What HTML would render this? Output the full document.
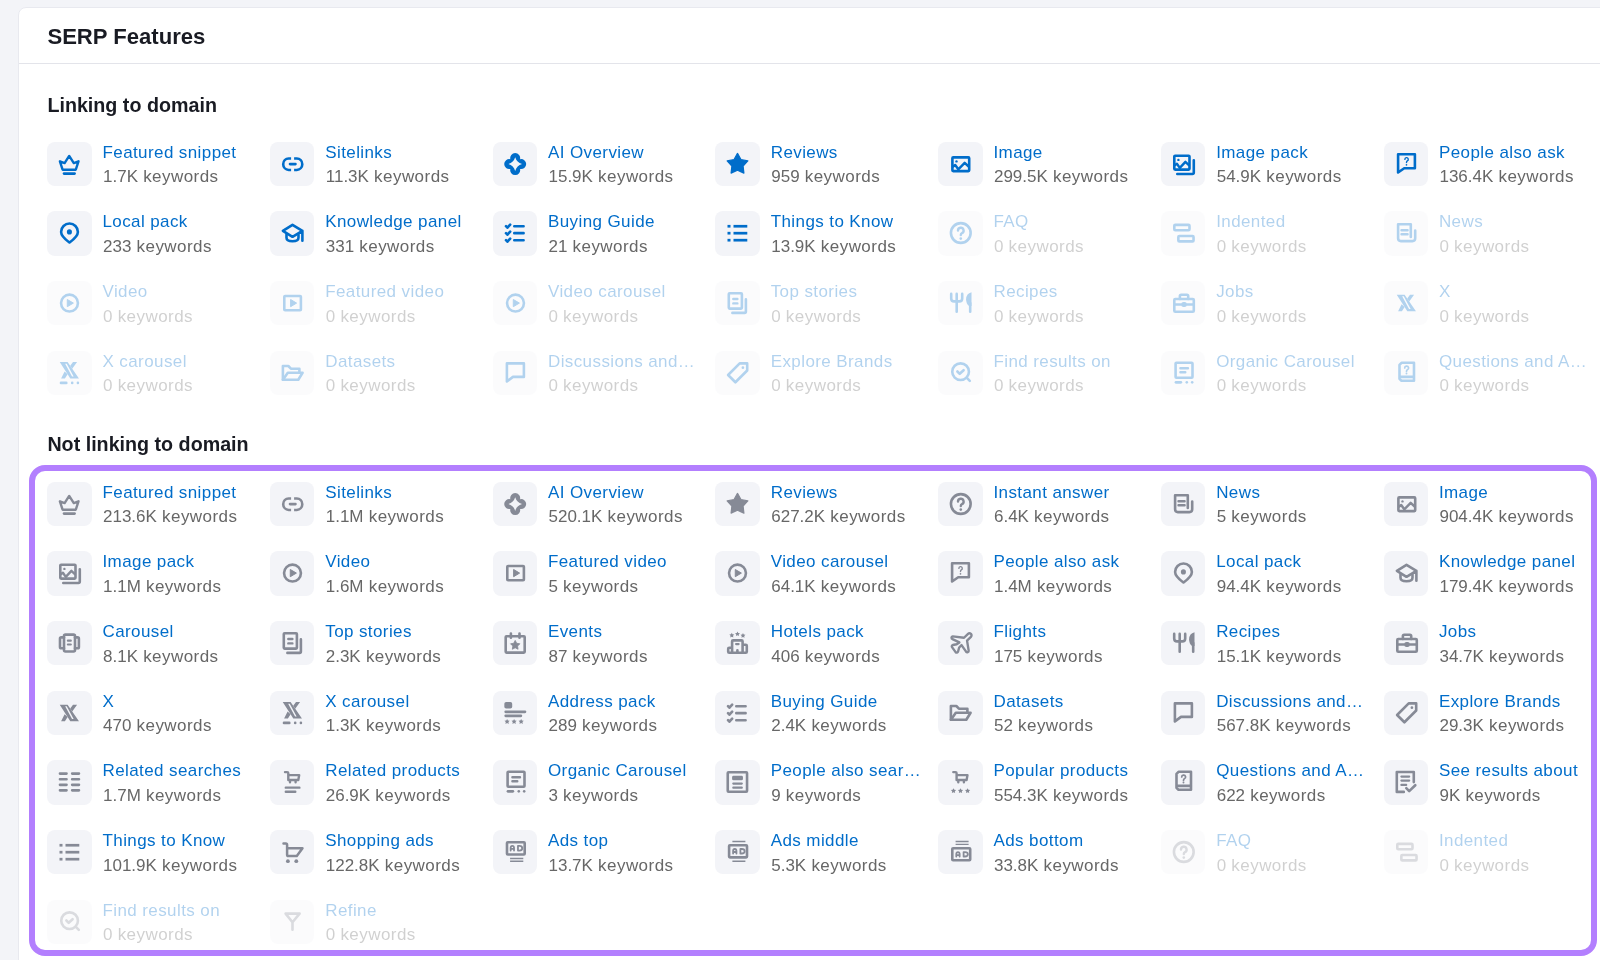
<!DOCTYPE html>
<html><head><meta charset="utf-8"><title>SERP Features</title>
<style>
html,body{margin:0;padding:0;-webkit-font-smoothing:antialiased;width:1600px;height:960px;overflow:hidden;background:#f3f4f8;font-family:"Liberation Sans",sans-serif;}
.wrap{position:absolute;left:0;top:0;width:1600px;height:960px;will-change:transform;}
.card{position:absolute;left:18px;top:7.2px;width:1620px;height:1000px;background:#fff;border:1px solid #e8e9ef;border-radius:8px;box-sizing:border-box;}
.hdr{position:absolute;left:47.4px;top:23.5px;font-weight:bold;font-size:22.1px;line-height:26px;color:#191b23;white-space:nowrap;}
.div{position:absolute;left:19px;top:62.5px;width:1600px;height:1px;background:#e3e4ea;}
.sec{position:absolute;left:47.4px;font-weight:bold;font-size:19.7px;line-height:24px;color:#191b23;white-space:nowrap;}
.it{position:absolute;width:222px;height:44.4px;}
.it.dis{opacity:0.3;}
.bx{position:absolute;left:0;top:0;width:44.4px;height:44.4px;border-radius:8px;background:#f3f4f8;}
.bx svg{position:absolute;left:0;top:0;display:block;}
.nm{position:absolute;left:55.25px;top:1px;font-size:17px;line-height:20px;color:#006dca;letter-spacing:0.4px;white-space:nowrap;}
.ct{position:absolute;left:55.75px;top:25.7px;font-size:17px;line-height:20px;color:#676767;letter-spacing:0.45px;white-space:nowrap;}
.ct .n{letter-spacing:0;}
.hl{position:absolute;left:28.75px;top:465px;width:1568.25px;height:490.6px;box-sizing:border-box;border:6.6px solid #b37ffe;border-radius:16px;}
</style></head><body><div class="wrap">
<div class="card"></div>
<div class="hdr">SERP Features</div>
<div class="div"></div>
<div class="sec" style="top:92.9px">Linking to domain</div>
<div class="it" style="left:47.25px;top:141.50px"><div class="bx" style="color:#006dca"><svg width="44.4" height="44.4" viewBox="0 0 44.4 44.4"><path fill="none" stroke="currentColor" stroke-width="2.4" stroke-linecap="round" stroke-linejoin="round" d="M12.9 19.3 L17.6 21.1 L22.2 13.9 L26.8 21.1 L31.5 19.3 L28.8 27.7 H15.6 Z"/><path fill="none" stroke="currentColor" stroke-width="2.6" stroke-linecap="round" stroke-linejoin="round" d="M17 31.6 H27.6"/></svg></div><div class="nm">Featured snippet</div><div class="ct"><span class="n">1.7K</span> keywords</div></div>
<div class="it" style="left:269.99px;top:141.50px"><div class="bx" style="color:#006dca"><svg width="44.4" height="44.4" viewBox="0 0 44.4 44.4"><g fill="none" stroke="currentColor" stroke-width="2.6" stroke-linecap="butt" stroke-linejoin="round"><path d="M21.1 16.5 H18.7 A5.74 5.74 0 0 0 18.7 27.97 H21.1"/><path d="M24.1 16.5 H26.8 A5.74 5.74 0 0 1 26.8 27.97 H24.1"/></g><path fill="none" stroke="currentColor" stroke-width="2.6" stroke-linecap="round" stroke-linejoin="round" d="M20.0 22.1 H25.5"/></svg></div><div class="nm">Sitelinks</div><div class="ct"><span class="n">11.3K</span> keywords</div></div>
<div class="it" style="left:492.73px;top:141.50px"><div class="bx" style="color:#006dca"><svg width="44.4" height="44.4" viewBox="0 0 44.4 44.4"><path fill="currentColor" fill-rule="evenodd" transform="translate(22.2 22.1)" d="M-4.87 -4.87 A5 5 0 1 1 4.87 -4.87 A5 5 0 1 1 4.87 4.87 A5 5 0 1 1 -4.87 4.87 A5 5 0 1 1 -4.87 -4.87 Z M0 -6.8 Q1.6 -1.6 6.8 0 Q1.6 1.6 0 6.8 Q-1.6 1.6 -6.8 0 Q-1.6 -1.6 0 -6.8 Z"/></svg></div><div class="nm">AI Overview</div><div class="ct"><span class="n">15.9K</span> keywords</div></div>
<div class="it" style="left:715.47px;top:141.50px"><div class="bx" style="color:#006dca"><svg width="44.4" height="44.4" viewBox="0 0 44.4 44.4"><polygon fill="currentColor" stroke="currentColor" stroke-width="1.2" stroke-linejoin="round" points="22.50,11.40 25.97,17.53 32.87,18.93 28.11,24.12 28.91,31.12 22.50,28.20 16.09,31.12 16.89,24.12 12.13,18.93 19.03,17.53"/></svg></div><div class="nm">Reviews</div><div class="ct"><span class="n">959</span> keywords</div></div>
<div class="it" style="left:938.21px;top:141.50px"><div class="bx" style="color:#006dca"><svg width="44.4" height="44.4" viewBox="0 0 44.4 44.4"><rect fill="none" stroke="currentColor" stroke-width="2.6" stroke-linecap="round" stroke-linejoin="round" x="14.4" y="15.4" width="16.8" height="13.7" rx="0.8"/><circle fill="currentColor" cx="18.5" cy="19.4" r="1.2"/><path fill="none" stroke="currentColor" stroke-width="2.5" stroke-linecap="round" stroke-linejoin="round" d="M15.2 24.4 L17.2 23.1 L20.3 27.3 L26.7 20.9 L30.4 24.2"/></svg></div><div class="nm">Image</div><div class="ct"><span class="n">299.5K</span> keywords</div></div>
<div class="it" style="left:1160.95px;top:141.50px"><div class="bx" style="color:#006dca"><svg width="44.4" height="44.4" viewBox="0 0 44.4 44.4"><rect fill="none" stroke="currentColor" stroke-width="2.6" stroke-linecap="round" stroke-linejoin="round" x="13.3" y="13.8" width="15.2" height="13.8" rx="0.8"/><circle fill="currentColor" cx="17.4" cy="17.9" r="1.2"/><path fill="none" stroke="currentColor" stroke-width="2.4" stroke-linecap="round" stroke-linejoin="round" d="M14.1 22.9 L15.9 21.7 L18.8 25.9 L24.4 19.9 L27.6 22.9"/><path fill="none" stroke="currentColor" stroke-width="2.6" stroke-linecap="round" stroke-linejoin="round" d="M16.3 32 H31.4 Q32.8 32 32.8 30.6 V18.2"/></svg></div><div class="nm">Image pack</div><div class="ct"><span class="n">54.9K</span> keywords</div></div>
<div class="it" style="left:1383.69px;top:141.50px"><div class="bx" style="color:#006dca"><svg width="44.4" height="44.4" viewBox="0 0 44.4 44.4"><path fill="none" stroke="currentColor" stroke-width="2.6" stroke-linecap="round" stroke-linejoin="round" d="M14.1 30.5 V12.2 H30.9 V26.3 H20.2 Z"/><path fill="none" stroke="currentColor" stroke-width="1.4" stroke-linecap="round" stroke-linejoin="round" d="M20.9 17.4 A1.7 1.7 0 1 1 23.3 18.9 Q22.5 19.4 22.5 20.6"/><circle fill="currentColor" cx="22.5" cy="22.8" r="0.85"/></svg></div><div class="nm">People also ask</div><div class="ct"><span class="n">136.4K</span> keywords</div></div>
<div class="it" style="left:47.25px;top:211.20px"><div class="bx" style="color:#006dca"><svg width="44.4" height="44.4" viewBox="0 0 44.4 44.4"><path fill="none" stroke="currentColor" stroke-width="2.6" stroke-linecap="round" stroke-linejoin="round" d="M22.5 31.5 C19 28.9 14.1 25.3 14.1 20.9 A8.4 8.4 0 0 1 30.9 20.9 C30.9 25.3 26 28.9 22.5 31.5Z"/><circle fill="currentColor" cx="22.4" cy="20.9" r="2.55"/></svg></div><div class="nm">Local pack</div><div class="ct"><span class="n">233</span> keywords</div></div>
<div class="it" style="left:269.99px;top:211.20px"><div class="bx" style="color:#006dca"><svg width="44.4" height="44.4" viewBox="0 0 44.4 44.4"><path fill="none" stroke="currentColor" stroke-width="2.6" stroke-linecap="round" stroke-linejoin="round" d="M12.9 19.8 L22.5 13.8 L32.4 19.8 L22.5 25.8 Z M32.4 19.8 V29.8"/><path fill="none" stroke="currentColor" stroke-width="2.6" stroke-linecap="round" stroke-linejoin="round" d="M16.5 23.4 V26.8 Q16.5 30.3 22.5 30.3 Q28.5 30.3 28.5 26.8 V23.4"/></svg></div><div class="nm">Knowledge panel</div><div class="ct"><span class="n">331</span> keywords</div></div>
<div class="it" style="left:492.73px;top:211.20px"><div class="bx" style="color:#006dca"><svg width="44.4" height="44.4" viewBox="0 0 44.4 44.4"><g fill="none" stroke="currentColor" stroke-width="2.6" stroke-linecap="round" stroke-linejoin="round"><path d="M13.0 15.2 L14.4 16.7 L17.2 13.6"/><path d="M13.0 22.2 L14.4 23.7 L17.2 20.6"/><path d="M13.0 29.2 L14.4 30.7 L17.2 27.6"/><path d="M21.3 15.2 H30.6 M21.3 22.15 H30.6 M21.3 29.2 H30.6"/></g></svg></div><div class="nm">Buying Guide</div><div class="ct"><span class="n">21</span> keywords</div></div>
<div class="it" style="left:715.47px;top:211.20px"><div class="bx" style="color:#006dca"><svg width="44.4" height="44.4" viewBox="0 0 44.4 44.4"><g fill="currentColor"><rect x="12.5" y="13.9" width="3" height="2.7"/><rect x="18.5" y="13.9" width="13.8" height="2.7"/><rect x="12.5" y="20.85" width="3" height="2.7"/><rect x="18.5" y="20.85" width="13.8" height="2.7"/><rect x="12.5" y="27.85" width="3" height="2.7"/><rect x="18.5" y="27.85" width="13.8" height="2.7"/></g></svg></div><div class="nm">Things to Know</div><div class="ct"><span class="n">13.9K</span> keywords</div></div>
<div class="it dis" style="left:938.21px;top:211.20px"><div class="bx" style="color:#006dca"><svg width="44.4" height="44.4" viewBox="0 0 44.4 44.4"><circle fill="none" stroke="currentColor" stroke-width="2.6" stroke-linecap="round" stroke-linejoin="round" cx="22.8" cy="22.0" r="9.85"/><path fill="none" stroke="currentColor" stroke-width="2.4" stroke-linecap="round" stroke-linejoin="round" d="M20.0 19.6 A2.8 2.8 0 1 1 24.0 22.1 Q22.8 22.7 22.8 24.0"/><circle fill="currentColor" cx="22.8" cy="27.6" r="1.3"/></svg></div><div class="nm">FAQ</div><div class="ct"><span class="n">0</span> keywords</div></div>
<div class="it dis" style="left:1160.95px;top:211.20px"><div class="bx" style="color:#006dca"><svg width="44.4" height="44.4" viewBox="0 0 44.4 44.4"><rect fill="none" stroke="currentColor" stroke-width="2.6" stroke-linecap="round" stroke-linejoin="round" x="13.3" y="13.85" width="15.2" height="5.45" rx="1"/><rect fill="none" stroke="currentColor" stroke-width="2.6" stroke-linecap="round" stroke-linejoin="round" x="17.35" y="24.95" width="15.2" height="5.45" rx="1"/></svg></div><div class="nm">Indented</div><div class="ct"><span class="n">0</span> keywords</div></div>
<div class="it dis" style="left:1383.69px;top:211.20px"><div class="bx" style="color:#006dca"><svg width="44.4" height="44.4" viewBox="0 0 44.4 44.4"><path fill="none" stroke="currentColor" stroke-width="2.6" stroke-linecap="round" stroke-linejoin="round" d="M26.8 26 V13.3 H14.1 V27.3 Q14.1 30.1 16.9 30.1 H28.4 Q31.2 30.1 31.2 27.3 V19.5"/><path fill="none" stroke="currentColor" stroke-width="2.4" stroke-linecap="round" stroke-linejoin="round" d="M17.5 19.3 H23.6 M17.5 23.3 H23.6"/></svg></div><div class="nm">News</div><div class="ct"><span class="n">0</span> keywords</div></div>
<div class="it dis" style="left:47.25px;top:280.90px"><div class="bx" style="color:#006dca"><svg width="44.4" height="44.4" viewBox="0 0 44.4 44.4"><circle fill="none" stroke="currentColor" stroke-width="2.6" stroke-linecap="round" stroke-linejoin="round" cx="22.5" cy="22.1" r="8.45"/><path fill="currentColor" stroke="currentColor" stroke-width="1" stroke-linejoin="round" d="M20.3 18.5 L26.4 22.1 L20.3 25.7 Z"/></svg></div><div class="nm">Video</div><div class="ct"><span class="n">0</span> keywords</div></div>
<div class="it dis" style="left:269.99px;top:280.90px"><div class="bx" style="color:#006dca"><svg width="44.4" height="44.4" viewBox="0 0 44.4 44.4"><rect fill="none" stroke="currentColor" stroke-width="2.6" stroke-linecap="round" stroke-linejoin="round" x="14.3" y="15.0" width="16.6" height="14.2" rx="0.8"/><path fill="currentColor" stroke="currentColor" stroke-width="1" stroke-linejoin="round" d="M20.6 18.5 L26.6 22.1 L20.6 25.7 Z"/></svg></div><div class="nm">Featured video</div><div class="ct"><span class="n">0</span> keywords</div></div>
<div class="it dis" style="left:492.73px;top:280.90px"><div class="bx" style="color:#006dca"><svg width="44.4" height="44.4" viewBox="0 0 44.4 44.4"><circle fill="none" stroke="currentColor" stroke-width="2.6" stroke-linecap="round" stroke-linejoin="round" cx="22.5" cy="22.1" r="8.45"/><path fill="currentColor" stroke="currentColor" stroke-width="1" stroke-linejoin="round" d="M20.3 18.5 L26.4 22.1 L20.3 25.7 Z"/></svg></div><div class="nm">Video carousel</div><div class="ct"><span class="n">0</span> keywords</div></div>
<div class="it dis" style="left:715.47px;top:280.90px"><div class="bx" style="color:#006dca"><svg width="44.4" height="44.4" viewBox="0 0 44.4 44.4"><rect fill="none" stroke="currentColor" stroke-width="2.6" stroke-linecap="round" stroke-linejoin="round" x="13.8" y="12.3" width="13.1" height="15.3" rx="0.8"/><path fill="none" stroke="currentColor" stroke-width="2.4" stroke-linecap="round" stroke-linejoin="round" d="M18.3 18.0 H22.4 M18.3 22.4 H22.4"/><path fill="none" stroke="currentColor" stroke-width="2.6" stroke-linecap="round" stroke-linejoin="round" d="M17.4 31.9 H29.6 Q30.9 31.9 30.9 30.6 V18.4"/></svg></div><div class="nm">Top stories</div><div class="ct"><span class="n">0</span> keywords</div></div>
<div class="it dis" style="left:938.21px;top:280.90px"><div class="bx" style="color:#006dca"><svg width="44.4" height="44.4" viewBox="0 0 44.4 44.4"><path fill="none" stroke="currentColor" stroke-width="2.6" stroke-linecap="round" stroke-linejoin="round" d="M13.2 12.9 V17.5 Q13.2 20.4 16.1 20.4 H21.3 Q24.2 20.4 24.2 17.5 V12.9 M18.7 12.9 V30.7 M32.2 22 V30.7"/><path fill="currentColor" d="M33.5 11.3 V25 H31 Q28.1 23 28.1 18.2 Q28.3 12.5 33.5 11.3 Z"/></svg></div><div class="nm">Recipes</div><div class="ct"><span class="n">0</span> keywords</div></div>
<div class="it dis" style="left:1160.95px;top:280.90px"><div class="bx" style="color:#006dca"><svg width="44.4" height="44.4" viewBox="0 0 44.4 44.4"><rect fill="none" stroke="currentColor" stroke-width="2.6" stroke-linecap="round" stroke-linejoin="round" x="13.3" y="18" width="19.5" height="12.8" rx="1"/><path fill="none" stroke="currentColor" stroke-width="2.6" stroke-linecap="round" stroke-linejoin="round" d="M18.9 18 V15.0 Q18.9 13.7 20.2 13.7 H25.9 Q27.2 13.7 27.2 15.0 V18 M13.3 23.5 H32.8"/><rect fill="currentColor" x="20.3" y="21.0" width="5.5" height="4.9" rx="2.2"/></svg></div><div class="nm">Jobs</div><div class="ct"><span class="n">0</span> keywords</div></div>
<div class="it dis" style="left:1383.69px;top:280.90px"><div class="bx" style="color:#006dca"><svg width="44.4" height="44.4" viewBox="0 0 44.4 44.4"><path fill="currentColor" fill-rule="evenodd" d="M12.73 13.73 H20.6 L31.96 30.26 H23.3 Z M18.16 15.36 H19.76 L26.64 28.09 H25.04 Z"/><path fill="currentColor" d="M26.0 13.73 H30.1 L25.21 20.44 L23.22 17.54 Z M14.1 30.26 H17.9 L20.63 25.89 L17.6 23.2 Z"/></svg></div><div class="nm">X</div><div class="ct"><span class="n">0</span> keywords</div></div>
<div class="it dis" style="left:47.25px;top:350.60px"><div class="bx" style="color:#006dca"><svg width="44.4" height="44.4" viewBox="0 0 44.4 44.4"><g transform="translate(0 -2.7)"><path fill="currentColor" fill-rule="evenodd" d="M12.73 13.73 H20.6 L31.96 30.26 H23.3 Z M18.16 15.36 H19.76 L26.64 28.09 H25.04 Z"/><path fill="currentColor" d="M26.0 13.73 H30.1 L25.21 20.44 L23.22 17.54 Z M14.1 30.26 H17.9 L20.63 25.89 L17.6 23.2 Z"/></g><path fill="none" stroke="currentColor" stroke-width="2.6" stroke-linecap="round" stroke-linejoin="round" d="M14.0 31.9 H19.3"/><circle fill="currentColor" cx="25.2" cy="31.9" r="1.3"/><circle fill="currentColor" cx="30.9" cy="31.9" r="1.3"/></svg></div><div class="nm">X carousel</div><div class="ct"><span class="n">0</span> keywords</div></div>
<div class="it dis" style="left:269.99px;top:350.60px"><div class="bx" style="color:#006dca"><svg width="44.4" height="44.4" viewBox="0 0 44.4 44.4"><path fill="none" stroke="currentColor" stroke-width="2.6" stroke-linecap="round" stroke-linejoin="round" d="M12.9 28.8 V15.0 H18.3 L20.9 17.7 H29.4 V21.0"/><path fill="none" stroke="currentColor" stroke-width="2.6" stroke-linecap="round" stroke-linejoin="round" d="M12.9 28.8 L17.8 21.8 H32.6 L28.3 28.8 Z"/></svg></div><div class="nm">Datasets</div><div class="ct"><span class="n">0</span> keywords</div></div>
<div class="it dis" style="left:492.73px;top:350.60px"><div class="bx" style="color:#006dca"><svg width="44.4" height="44.4" viewBox="0 0 44.4 44.4"><path fill="none" stroke="currentColor" stroke-width="2.6" stroke-linecap="round" stroke-linejoin="round" d="M13.9 30.4 V12.4 H30.9 V25.9 H20.0 Z"/></svg></div><div class="nm">Discussions and…</div><div class="ct"><span class="n">0</span> keywords</div></div>
<div class="it dis" style="left:715.47px;top:350.60px"><div class="bx" style="color:#006dca"><svg width="44.4" height="44.4" viewBox="0 0 44.4 44.4"><path fill="none" stroke="currentColor" stroke-width="2.6" stroke-linecap="round" stroke-linejoin="round" d="M32.2 12.4 V19.5 L20.4 31.3 L13.1 24 L24.7 12.4 Z"/><circle fill="currentColor" cx="27.9" cy="16.7" r="1.35"/></svg></div><div class="nm">Explore Brands</div><div class="ct"><span class="n">0</span> keywords</div></div>
<div class="it dis" style="left:938.21px;top:350.60px"><div class="bx" style="color:#006dca"><svg width="44.4" height="44.4" viewBox="0 0 44.4 44.4"><circle fill="none" stroke="currentColor" stroke-width="2.6" stroke-linecap="round" stroke-linejoin="round" cx="22.6" cy="20.7" r="8.35"/><path fill="none" stroke="currentColor" stroke-width="2.6" stroke-linecap="round" stroke-linejoin="round" d="M28.6 26.7 L31.8 29.9"/><path fill="none" stroke="currentColor" stroke-width="2.6" stroke-linecap="round" stroke-linejoin="round" d="M19.4 20.5 L21.7 22.8 L25.6 19.2"/></svg></div><div class="nm">Find results on</div><div class="ct"><span class="n">0</span> keywords</div></div>
<div class="it dis" style="left:1160.95px;top:350.60px"><div class="bx" style="color:#006dca"><svg width="44.4" height="44.4" viewBox="0 0 44.4 44.4"><rect fill="none" stroke="currentColor" stroke-width="2.6" stroke-linecap="round" stroke-linejoin="round" x="14.6" y="11.8" width="16.9" height="15.0" rx="0.8"/><path fill="none" stroke="currentColor" stroke-width="2.4" stroke-linecap="round" stroke-linejoin="round" d="M19.4 17.3 H27.0 M19.4 21.3 H24.3"/><path fill="none" stroke="currentColor" stroke-width="2.6" stroke-linecap="round" stroke-linejoin="round" d="M14.9 31.35 H19.9"/><circle fill="currentColor" cx="25.8" cy="31.35" r="1.3"/><circle fill="currentColor" cx="31.2" cy="31.35" r="1.3"/></svg></div><div class="nm">Organic Carousel</div><div class="ct"><span class="n">0</span> keywords</div></div>
<div class="it dis" style="left:1383.69px;top:350.60px"><div class="bx" style="color:#006dca"><svg width="44.4" height="44.4" viewBox="0 0 44.4 44.4"><path fill="none" stroke="currentColor" stroke-width="2.6" stroke-linecap="round" stroke-linejoin="round" d="M17.5 11.8 H30.0 V29.8 H17.5 L15.5 27.8 V13.8 Z M15.5 25.9 H30.0"/><path fill="none" stroke="currentColor" stroke-width="1.7" stroke-linecap="round" stroke-linejoin="round" d="M20.7 17.0 A1.95 1.95 0 1 1 23.4 18.8 Q22.5 19.3 22.5 20.4"/><circle fill="currentColor" cx="22.5" cy="22.5" r="0.95"/></svg></div><div class="nm">Questions and A…</div><div class="ct"><span class="n">0</span> keywords</div></div>
<div class="sec" style="top:431.9px">Not linking to domain</div>
<div class="it" style="left:47.25px;top:481.50px"><div class="bx" style="color:#868a96"><svg width="44.4" height="44.4" viewBox="0 0 44.4 44.4"><path fill="none" stroke="currentColor" stroke-width="2.4" stroke-linecap="round" stroke-linejoin="round" d="M12.9 19.3 L17.6 21.1 L22.2 13.9 L26.8 21.1 L31.5 19.3 L28.8 27.7 H15.6 Z"/><path fill="none" stroke="currentColor" stroke-width="2.6" stroke-linecap="round" stroke-linejoin="round" d="M17 31.6 H27.6"/></svg></div><div class="nm">Featured snippet</div><div class="ct"><span class="n">213.6K</span> keywords</div></div>
<div class="it" style="left:269.99px;top:481.50px"><div class="bx" style="color:#868a96"><svg width="44.4" height="44.4" viewBox="0 0 44.4 44.4"><g fill="none" stroke="currentColor" stroke-width="2.6" stroke-linecap="butt" stroke-linejoin="round"><path d="M21.1 16.5 H18.7 A5.74 5.74 0 0 0 18.7 27.97 H21.1"/><path d="M24.1 16.5 H26.8 A5.74 5.74 0 0 1 26.8 27.97 H24.1"/></g><path fill="none" stroke="currentColor" stroke-width="2.6" stroke-linecap="round" stroke-linejoin="round" d="M20.0 22.1 H25.5"/></svg></div><div class="nm">Sitelinks</div><div class="ct"><span class="n">1.1M</span> keywords</div></div>
<div class="it" style="left:492.73px;top:481.50px"><div class="bx" style="color:#868a96"><svg width="44.4" height="44.4" viewBox="0 0 44.4 44.4"><path fill="currentColor" fill-rule="evenodd" transform="translate(22.2 22.1)" d="M-4.87 -4.87 A5 5 0 1 1 4.87 -4.87 A5 5 0 1 1 4.87 4.87 A5 5 0 1 1 -4.87 4.87 A5 5 0 1 1 -4.87 -4.87 Z M0 -6.8 Q1.6 -1.6 6.8 0 Q1.6 1.6 0 6.8 Q-1.6 1.6 -6.8 0 Q-1.6 -1.6 0 -6.8 Z"/></svg></div><div class="nm">AI Overview</div><div class="ct"><span class="n">520.1K</span> keywords</div></div>
<div class="it" style="left:715.47px;top:481.50px"><div class="bx" style="color:#868a96"><svg width="44.4" height="44.4" viewBox="0 0 44.4 44.4"><polygon fill="currentColor" stroke="currentColor" stroke-width="1.2" stroke-linejoin="round" points="22.50,11.40 25.97,17.53 32.87,18.93 28.11,24.12 28.91,31.12 22.50,28.20 16.09,31.12 16.89,24.12 12.13,18.93 19.03,17.53"/></svg></div><div class="nm">Reviews</div><div class="ct"><span class="n">627.2K</span> keywords</div></div>
<div class="it" style="left:938.21px;top:481.50px"><div class="bx" style="color:#868a96"><svg width="44.4" height="44.4" viewBox="0 0 44.4 44.4"><circle fill="none" stroke="currentColor" stroke-width="2.6" stroke-linecap="round" stroke-linejoin="round" cx="22.8" cy="22.0" r="9.85"/><path fill="none" stroke="currentColor" stroke-width="2.4" stroke-linecap="round" stroke-linejoin="round" d="M20.0 19.6 A2.8 2.8 0 1 1 24.0 22.1 Q22.8 22.7 22.8 24.0"/><circle fill="currentColor" cx="22.8" cy="27.6" r="1.3"/></svg></div><div class="nm">Instant answer</div><div class="ct"><span class="n">6.4K</span> keywords</div></div>
<div class="it" style="left:1160.95px;top:481.50px"><div class="bx" style="color:#868a96"><svg width="44.4" height="44.4" viewBox="0 0 44.4 44.4"><path fill="none" stroke="currentColor" stroke-width="2.6" stroke-linecap="round" stroke-linejoin="round" d="M26.8 26 V13.3 H14.1 V27.3 Q14.1 30.1 16.9 30.1 H28.4 Q31.2 30.1 31.2 27.3 V19.5"/><path fill="none" stroke="currentColor" stroke-width="2.4" stroke-linecap="round" stroke-linejoin="round" d="M17.5 19.3 H23.6 M17.5 23.3 H23.6"/></svg></div><div class="nm">News</div><div class="ct"><span class="n">5</span> keywords</div></div>
<div class="it" style="left:1383.69px;top:481.50px"><div class="bx" style="color:#868a96"><svg width="44.4" height="44.4" viewBox="0 0 44.4 44.4"><rect fill="none" stroke="currentColor" stroke-width="2.6" stroke-linecap="round" stroke-linejoin="round" x="14.4" y="15.4" width="16.8" height="13.7" rx="0.8"/><circle fill="currentColor" cx="18.5" cy="19.4" r="1.2"/><path fill="none" stroke="currentColor" stroke-width="2.5" stroke-linecap="round" stroke-linejoin="round" d="M15.2 24.4 L17.2 23.1 L20.3 27.3 L26.7 20.9 L30.4 24.2"/></svg></div><div class="nm">Image</div><div class="ct"><span class="n">904.4K</span> keywords</div></div>
<div class="it" style="left:47.25px;top:551.20px"><div class="bx" style="color:#868a96"><svg width="44.4" height="44.4" viewBox="0 0 44.4 44.4"><rect fill="none" stroke="currentColor" stroke-width="2.6" stroke-linecap="round" stroke-linejoin="round" x="13.3" y="13.8" width="15.2" height="13.8" rx="0.8"/><circle fill="currentColor" cx="17.4" cy="17.9" r="1.2"/><path fill="none" stroke="currentColor" stroke-width="2.4" stroke-linecap="round" stroke-linejoin="round" d="M14.1 22.9 L15.9 21.7 L18.8 25.9 L24.4 19.9 L27.6 22.9"/><path fill="none" stroke="currentColor" stroke-width="2.6" stroke-linecap="round" stroke-linejoin="round" d="M16.3 32 H31.4 Q32.8 32 32.8 30.6 V18.2"/></svg></div><div class="nm">Image pack</div><div class="ct"><span class="n">1.1M</span> keywords</div></div>
<div class="it" style="left:269.99px;top:551.20px"><div class="bx" style="color:#868a96"><svg width="44.4" height="44.4" viewBox="0 0 44.4 44.4"><circle fill="none" stroke="currentColor" stroke-width="2.6" stroke-linecap="round" stroke-linejoin="round" cx="22.5" cy="22.1" r="8.45"/><path fill="currentColor" stroke="currentColor" stroke-width="1" stroke-linejoin="round" d="M20.3 18.5 L26.4 22.1 L20.3 25.7 Z"/></svg></div><div class="nm">Video</div><div class="ct"><span class="n">1.6M</span> keywords</div></div>
<div class="it" style="left:492.73px;top:551.20px"><div class="bx" style="color:#868a96"><svg width="44.4" height="44.4" viewBox="0 0 44.4 44.4"><rect fill="none" stroke="currentColor" stroke-width="2.6" stroke-linecap="round" stroke-linejoin="round" x="14.3" y="15.0" width="16.6" height="14.2" rx="0.8"/><path fill="currentColor" stroke="currentColor" stroke-width="1" stroke-linejoin="round" d="M20.6 18.5 L26.6 22.1 L20.6 25.7 Z"/></svg></div><div class="nm">Featured video</div><div class="ct"><span class="n">5</span> keywords</div></div>
<div class="it" style="left:715.47px;top:551.20px"><div class="bx" style="color:#868a96"><svg width="44.4" height="44.4" viewBox="0 0 44.4 44.4"><circle fill="none" stroke="currentColor" stroke-width="2.6" stroke-linecap="round" stroke-linejoin="round" cx="22.5" cy="22.1" r="8.45"/><path fill="currentColor" stroke="currentColor" stroke-width="1" stroke-linejoin="round" d="M20.3 18.5 L26.4 22.1 L20.3 25.7 Z"/></svg></div><div class="nm">Video carousel</div><div class="ct"><span class="n">64.1K</span> keywords</div></div>
<div class="it" style="left:938.21px;top:551.20px"><div class="bx" style="color:#868a96"><svg width="44.4" height="44.4" viewBox="0 0 44.4 44.4"><path fill="none" stroke="currentColor" stroke-width="2.6" stroke-linecap="round" stroke-linejoin="round" d="M14.1 30.5 V12.2 H30.9 V26.3 H20.2 Z"/><path fill="none" stroke="currentColor" stroke-width="1.4" stroke-linecap="round" stroke-linejoin="round" d="M20.9 17.4 A1.7 1.7 0 1 1 23.3 18.9 Q22.5 19.4 22.5 20.6"/><circle fill="currentColor" cx="22.5" cy="22.8" r="0.85"/></svg></div><div class="nm">People also ask</div><div class="ct"><span class="n">1.4M</span> keywords</div></div>
<div class="it" style="left:1160.95px;top:551.20px"><div class="bx" style="color:#868a96"><svg width="44.4" height="44.4" viewBox="0 0 44.4 44.4"><path fill="none" stroke="currentColor" stroke-width="2.6" stroke-linecap="round" stroke-linejoin="round" d="M22.5 31.5 C19 28.9 14.1 25.3 14.1 20.9 A8.4 8.4 0 0 1 30.9 20.9 C30.9 25.3 26 28.9 22.5 31.5Z"/><circle fill="currentColor" cx="22.4" cy="20.9" r="2.55"/></svg></div><div class="nm">Local pack</div><div class="ct"><span class="n">94.4K</span> keywords</div></div>
<div class="it" style="left:1383.69px;top:551.20px"><div class="bx" style="color:#868a96"><svg width="44.4" height="44.4" viewBox="0 0 44.4 44.4"><path fill="none" stroke="currentColor" stroke-width="2.6" stroke-linecap="round" stroke-linejoin="round" d="M12.9 19.8 L22.5 13.8 L32.4 19.8 L22.5 25.8 Z M32.4 19.8 V29.8"/><path fill="none" stroke="currentColor" stroke-width="2.6" stroke-linecap="round" stroke-linejoin="round" d="M16.5 23.4 V26.8 Q16.5 30.3 22.5 30.3 Q28.5 30.3 28.5 26.8 V23.4"/></svg></div><div class="nm">Knowledge panel</div><div class="ct"><span class="n">179.4K</span> keywords</div></div>
<div class="it" style="left:47.25px;top:620.90px"><div class="bx" style="color:#868a96"><svg width="44.4" height="44.4" viewBox="0 0 44.4 44.4"><rect fill="none" stroke="currentColor" stroke-width="2.6" stroke-linecap="round" stroke-linejoin="round" x="17.0" y="13.65" width="11.0" height="16.9" rx="1.5"/><path fill="none" stroke="currentColor" stroke-width="2.6" stroke-linecap="round" stroke-linejoin="round" d="M17 16.4 H14.3 Q13 16.4 13 17.7 V26.0 Q13 27.3 14.3 27.3 H17 M28 16.4 H30.6 Q31.9 16.4 31.9 17.7 V26.0 Q31.9 27.3 30.6 27.3 H28"/><path fill="none" stroke="currentColor" stroke-width="2.2" stroke-linecap="round" stroke-linejoin="round" d="M20.9 19.7 H23.8 M20.9 23.5 H23.8"/></svg></div><div class="nm">Carousel</div><div class="ct"><span class="n">8.1K</span> keywords</div></div>
<div class="it" style="left:269.99px;top:620.90px"><div class="bx" style="color:#868a96"><svg width="44.4" height="44.4" viewBox="0 0 44.4 44.4"><rect fill="none" stroke="currentColor" stroke-width="2.6" stroke-linecap="round" stroke-linejoin="round" x="13.8" y="12.3" width="13.1" height="15.3" rx="0.8"/><path fill="none" stroke="currentColor" stroke-width="2.4" stroke-linecap="round" stroke-linejoin="round" d="M18.3 18.0 H22.4 M18.3 22.4 H22.4"/><path fill="none" stroke="currentColor" stroke-width="2.6" stroke-linecap="round" stroke-linejoin="round" d="M17.4 31.9 H29.6 Q30.9 31.9 30.9 30.6 V18.4"/></svg></div><div class="nm">Top stories</div><div class="ct"><span class="n">2.3K</span> keywords</div></div>
<div class="it" style="left:492.73px;top:620.90px"><div class="bx" style="color:#868a96"><svg width="44.4" height="44.4" viewBox="0 0 44.4 44.4"><rect fill="none" stroke="currentColor" stroke-width="2.6" stroke-linecap="round" stroke-linejoin="round" x="12.7" y="15.3" width="19.0" height="16.3" rx="0.8"/><path fill="none" stroke="currentColor" stroke-width="2.6" stroke-linecap="round" stroke-linejoin="round" d="M17.9 12.6 V16.8 M26.5 12.6 V16.8"/><polygon fill="currentColor" stroke="currentColor" stroke-width="0.8" stroke-linejoin="round" points="22.20,19.40 23.67,22.28 26.86,22.79 24.58,25.07 25.08,28.26 22.20,26.80 19.32,28.26 19.82,25.07 17.54,22.79 20.73,22.28"/></svg></div><div class="nm">Events</div><div class="ct"><span class="n">87</span> keywords</div></div>
<div class="it" style="left:715.47px;top:620.90px"><div class="bx" style="color:#868a96"><svg width="44.4" height="44.4" viewBox="0 0 44.4 44.4"><polygon fill="currentColor" points="16.80,11.80 17.56,13.35 19.27,13.60 18.04,14.80 18.33,16.50 16.80,15.70 15.27,16.50 15.56,14.80 14.33,13.60 16.04,13.35"/><polygon fill="currentColor" points="22.50,10.40 23.26,11.95 24.97,12.20 23.74,13.40 24.03,15.10 22.50,14.30 20.97,15.10 21.26,13.40 20.03,12.20 21.74,11.95"/><polygon fill="currentColor" points="28.00,12.00 28.76,13.55 30.47,13.80 29.24,15.00 29.53,16.70 28.00,15.90 26.47,16.70 26.76,15.00 25.53,13.80 27.24,13.55"/><path fill="none" stroke="currentColor" stroke-width="2.6" stroke-linecap="round" stroke-linejoin="round" d="M17.1 31.8 V20.4 Q17.1 19.4 18.1 19.4 H26.6 Q27.6 19.4 27.6 20.4 V31.8 M17.1 26.7 H14.2 Q13.2 26.7 13.2 27.7 V30.8 Q13.2 31.8 14.2 31.8 H30.8 Q31.8 31.8 31.8 30.8 V24.7 Q31.8 23.7 30.8 23.7 H27.6 M22.4 29.2 V31.8"/><path fill="none" stroke="currentColor" stroke-width="2.2" stroke-linecap="round" stroke-linejoin="round" d="M21.1 23.1 H23.6"/></svg></div><div class="nm">Hotels pack</div><div class="ct"><span class="n">406</span> keywords</div></div>
<div class="it" style="left:938.21px;top:620.90px"><div class="bx" style="color:#868a96"><svg width="44.4" height="44.4" viewBox="0 0 44.4 44.4"><path fill="none" stroke="currentColor" stroke-width="2.2" stroke-linecap="round" stroke-linejoin="round" transform="translate(22.9 22.6) scale(1.08) translate(-22.5 -22)" d="M25.4 16.6 L29.1 13.0 A1.9 1.9 0 0 1 31.8 15.7 L28.2 19.3 L29.7 28.5 A1.35 1.35 0 0 1 27.3 29.5 L23.1 23.4 L20.9 25.6 L19.9 29.3 A1.35 1.35 0 0 1 17.6 29.9 L14.3 25.3 A1.35 1.35 0 0 1 15.0 23.3 L18.6 22.6 L21.1 20.9 L14.7 17.9 A1.35 1.35 0 0 1 14.9 15.3 Z"/></svg></div><div class="nm">Flights</div><div class="ct"><span class="n">175</span> keywords</div></div>
<div class="it" style="left:1160.95px;top:620.90px"><div class="bx" style="color:#868a96"><svg width="44.4" height="44.4" viewBox="0 0 44.4 44.4"><path fill="none" stroke="currentColor" stroke-width="2.6" stroke-linecap="round" stroke-linejoin="round" d="M13.2 12.9 V17.5 Q13.2 20.4 16.1 20.4 H21.3 Q24.2 20.4 24.2 17.5 V12.9 M18.7 12.9 V30.7 M32.2 22 V30.7"/><path fill="currentColor" d="M33.5 11.3 V25 H31 Q28.1 23 28.1 18.2 Q28.3 12.5 33.5 11.3 Z"/></svg></div><div class="nm">Recipes</div><div class="ct"><span class="n">15.1K</span> keywords</div></div>
<div class="it" style="left:1383.69px;top:620.90px"><div class="bx" style="color:#868a96"><svg width="44.4" height="44.4" viewBox="0 0 44.4 44.4"><rect fill="none" stroke="currentColor" stroke-width="2.6" stroke-linecap="round" stroke-linejoin="round" x="13.3" y="18" width="19.5" height="12.8" rx="1"/><path fill="none" stroke="currentColor" stroke-width="2.6" stroke-linecap="round" stroke-linejoin="round" d="M18.9 18 V15.0 Q18.9 13.7 20.2 13.7 H25.9 Q27.2 13.7 27.2 15.0 V18 M13.3 23.5 H32.8"/><rect fill="currentColor" x="20.3" y="21.0" width="5.5" height="4.9" rx="2.2"/></svg></div><div class="nm">Jobs</div><div class="ct"><span class="n">34.7K</span> keywords</div></div>
<div class="it" style="left:47.25px;top:690.60px"><div class="bx" style="color:#868a96"><svg width="44.4" height="44.4" viewBox="0 0 44.4 44.4"><path fill="currentColor" fill-rule="evenodd" d="M12.73 13.73 H20.6 L31.96 30.26 H23.3 Z M18.16 15.36 H19.76 L26.64 28.09 H25.04 Z"/><path fill="currentColor" d="M26.0 13.73 H30.1 L25.21 20.44 L23.22 17.54 Z M14.1 30.26 H17.9 L20.63 25.89 L17.6 23.2 Z"/></svg></div><div class="nm">X</div><div class="ct"><span class="n">470</span> keywords</div></div>
<div class="it" style="left:269.99px;top:690.60px"><div class="bx" style="color:#868a96"><svg width="44.4" height="44.4" viewBox="0 0 44.4 44.4"><g transform="translate(0 -2.7)"><path fill="currentColor" fill-rule="evenodd" d="M12.73 13.73 H20.6 L31.96 30.26 H23.3 Z M18.16 15.36 H19.76 L26.64 28.09 H25.04 Z"/><path fill="currentColor" d="M26.0 13.73 H30.1 L25.21 20.44 L23.22 17.54 Z M14.1 30.26 H17.9 L20.63 25.89 L17.6 23.2 Z"/></g><path fill="none" stroke="currentColor" stroke-width="2.6" stroke-linecap="round" stroke-linejoin="round" d="M14.0 31.9 H19.3"/><circle fill="currentColor" cx="25.2" cy="31.9" r="1.3"/><circle fill="currentColor" cx="30.9" cy="31.9" r="1.3"/></svg></div><div class="nm">X carousel</div><div class="ct"><span class="n">1.3K</span> keywords</div></div>
<div class="it" style="left:492.73px;top:690.60px"><div class="bx" style="color:#868a96"><svg width="44.4" height="44.4" viewBox="0 0 44.4 44.4"><rect fill="currentColor" x="11.35" y="11.03" width="7.86" height="6.5" rx="1.8"/><path fill="none" stroke="currentColor" stroke-width="2.7" stroke-linecap="round" stroke-linejoin="round" d="M12.7 20.78 H32 M12.7 24.84 H27.9"/><polygon fill="currentColor" points="14.10,27.95 14.92,29.57 16.72,29.85 15.43,31.13 15.72,32.92 14.10,32.10 12.48,32.92 12.77,31.13 11.48,29.85 13.28,29.57"/><polygon fill="currentColor" points="21.10,27.95 21.92,29.57 23.72,29.85 22.43,31.13 22.72,32.92 21.10,32.10 19.48,32.92 19.77,31.13 18.48,29.85 20.28,29.57"/><polygon fill="currentColor" points="28.15,27.95 28.97,29.57 30.77,29.85 29.48,31.13 29.77,32.92 28.15,32.10 26.53,32.92 26.82,31.13 25.53,29.85 27.33,29.57"/></svg></div><div class="nm">Address pack</div><div class="ct"><span class="n">289</span> keywords</div></div>
<div class="it" style="left:715.47px;top:690.60px"><div class="bx" style="color:#868a96"><svg width="44.4" height="44.4" viewBox="0 0 44.4 44.4"><g fill="none" stroke="currentColor" stroke-width="2.6" stroke-linecap="round" stroke-linejoin="round"><path d="M13.0 15.2 L14.4 16.7 L17.2 13.6"/><path d="M13.0 22.2 L14.4 23.7 L17.2 20.6"/><path d="M13.0 29.2 L14.4 30.7 L17.2 27.6"/><path d="M21.3 15.2 H30.6 M21.3 22.15 H30.6 M21.3 29.2 H30.6"/></g></svg></div><div class="nm">Buying Guide</div><div class="ct"><span class="n">2.4K</span> keywords</div></div>
<div class="it" style="left:938.21px;top:690.60px"><div class="bx" style="color:#868a96"><svg width="44.4" height="44.4" viewBox="0 0 44.4 44.4"><path fill="none" stroke="currentColor" stroke-width="2.6" stroke-linecap="round" stroke-linejoin="round" d="M12.9 28.8 V15.0 H18.3 L20.9 17.7 H29.4 V21.0"/><path fill="none" stroke="currentColor" stroke-width="2.6" stroke-linecap="round" stroke-linejoin="round" d="M12.9 28.8 L17.8 21.8 H32.6 L28.3 28.8 Z"/></svg></div><div class="nm">Datasets</div><div class="ct"><span class="n">52</span> keywords</div></div>
<div class="it" style="left:1160.95px;top:690.60px"><div class="bx" style="color:#868a96"><svg width="44.4" height="44.4" viewBox="0 0 44.4 44.4"><path fill="none" stroke="currentColor" stroke-width="2.6" stroke-linecap="round" stroke-linejoin="round" d="M13.9 30.4 V12.4 H30.9 V25.9 H20.0 Z"/></svg></div><div class="nm">Discussions and…</div><div class="ct"><span class="n">567.8K</span> keywords</div></div>
<div class="it" style="left:1383.69px;top:690.60px"><div class="bx" style="color:#868a96"><svg width="44.4" height="44.4" viewBox="0 0 44.4 44.4"><path fill="none" stroke="currentColor" stroke-width="2.6" stroke-linecap="round" stroke-linejoin="round" d="M32.2 12.4 V19.5 L20.4 31.3 L13.1 24 L24.7 12.4 Z"/><circle fill="currentColor" cx="27.9" cy="16.7" r="1.35"/></svg></div><div class="nm">Explore Brands</div><div class="ct"><span class="n">29.3K</span> keywords</div></div>
<div class="it" style="left:47.25px;top:760.30px"><div class="bx" style="color:#868a96"><svg width="44.4" height="44.4" viewBox="0 0 44.4 44.4"><path fill="none" stroke="currentColor" stroke-width="2.7" stroke-linecap="round" stroke-linejoin="round" d="M13.0 13.58 H19.5 M25.2 13.58 H31.95 M13.0 19.26 H19.5 M25.2 19.26 H31.95 M13.0 24.84 H19.5 M25.2 24.84 H31.95 M13.0 30.37 H19.5 M25.2 30.37 H31.95"/></svg></div><div class="nm">Related searches</div><div class="ct"><span class="n">1.7M</span> keywords</div></div>
<div class="it" style="left:269.99px;top:760.30px"><div class="bx" style="color:#868a96"><svg width="44.4" height="44.4" viewBox="0 0 44.4 44.4"><path fill="none" stroke="currentColor" stroke-width="2.4" stroke-linecap="round" stroke-linejoin="round" d="M15.0 12.1 H17.1 Q18.3 12.1 18.3 13.3 V20.0 H28.3 L29.2 15.1 H18.3 M20.0 20.6 V22.2 M25.6 20.6 V22.2"/><path fill="none" stroke="currentColor" stroke-width="2.4" stroke-linecap="round" stroke-linejoin="round" d="M15.8 27.66 H29.4 M15.8 31.72 H25.3"/></svg></div><div class="nm">Related products</div><div class="ct"><span class="n">26.9K</span> keywords</div></div>
<div class="it" style="left:492.73px;top:760.30px"><div class="bx" style="color:#868a96"><svg width="44.4" height="44.4" viewBox="0 0 44.4 44.4"><rect fill="none" stroke="currentColor" stroke-width="2.6" stroke-linecap="round" stroke-linejoin="round" x="14.6" y="11.8" width="16.9" height="15.0" rx="0.8"/><path fill="none" stroke="currentColor" stroke-width="2.4" stroke-linecap="round" stroke-linejoin="round" d="M19.4 17.3 H27.0 M19.4 21.3 H24.3"/><path fill="none" stroke="currentColor" stroke-width="2.6" stroke-linecap="round" stroke-linejoin="round" d="M14.9 31.35 H19.9"/><circle fill="currentColor" cx="25.8" cy="31.35" r="1.3"/><circle fill="currentColor" cx="31.2" cy="31.35" r="1.3"/></svg></div><div class="nm">Organic Carousel</div><div class="ct"><span class="n">3</span> keywords</div></div>
<div class="it" style="left:715.47px;top:760.30px"><div class="bx" style="color:#868a96"><svg width="44.4" height="44.4" viewBox="0 0 44.4 44.4"><rect fill="none" stroke="currentColor" stroke-width="2.6" stroke-linecap="round" stroke-linejoin="round" x="12.75" y="12.2" width="19.3" height="19.55" rx="0.8"/><rect fill="currentColor" x="17.1" y="15.74" width="10.85" height="4.6" rx="1.4"/><path fill="none" stroke="currentColor" stroke-width="2.2" stroke-linecap="round" stroke-linejoin="round" d="M18.3 23.6 H26.8 M18.3 27.66 H26.8"/></svg></div><div class="nm">People also sear…</div><div class="ct"><span class="n">9</span> keywords</div></div>
<div class="it" style="left:938.21px;top:760.30px"><div class="bx" style="color:#868a96"><svg width="44.4" height="44.4" viewBox="0 0 44.4 44.4"><path fill="none" stroke="currentColor" stroke-width="2.4" stroke-linecap="round" stroke-linejoin="round" d="M15.3 12.1 H17.4 Q18.6 12.1 18.6 13.3 V20.0 H28.6 L29.5 15.1 H18.6 M20.3 20.6 V22.2 M25.9 20.6 V22.2"/><polygon fill="currentColor" points="15.50,28.15 16.32,29.77 18.12,30.05 16.83,31.33 17.12,33.12 15.50,32.30 13.88,33.12 14.17,31.33 12.88,30.05 14.68,29.77"/><polygon fill="currentColor" points="22.50,28.15 23.32,29.77 25.12,30.05 23.83,31.33 24.12,33.12 22.50,32.30 20.88,33.12 21.17,31.33 19.88,30.05 21.68,29.77"/><polygon fill="currentColor" points="29.60,28.15 30.42,29.77 32.22,30.05 30.93,31.33 31.22,33.12 29.60,32.30 27.98,33.12 28.27,31.33 26.98,30.05 28.78,29.77"/></svg></div><div class="nm">Popular products</div><div class="ct"><span class="n">554.3K</span> keywords</div></div>
<div class="it" style="left:1160.95px;top:760.30px"><div class="bx" style="color:#868a96"><svg width="44.4" height="44.4" viewBox="0 0 44.4 44.4"><path fill="none" stroke="currentColor" stroke-width="2.6" stroke-linecap="round" stroke-linejoin="round" d="M17.5 11.8 H30.0 V29.8 H17.5 L15.5 27.8 V13.8 Z M15.5 25.9 H30.0"/><path fill="none" stroke="currentColor" stroke-width="1.7" stroke-linecap="round" stroke-linejoin="round" d="M20.7 17.0 A1.95 1.95 0 1 1 23.4 18.8 Q22.5 19.3 22.5 20.4"/><circle fill="currentColor" cx="22.5" cy="22.5" r="0.95"/></svg></div><div class="nm">Questions and A…</div><div class="ct"><span class="n">622</span> keywords</div></div>
<div class="it" style="left:1383.69px;top:760.30px"><div class="bx" style="color:#868a96"><svg width="44.4" height="44.4" viewBox="0 0 44.4 44.4"><path fill="none" stroke="currentColor" stroke-width="2.6" stroke-linecap="round" stroke-linejoin="round" d="M29.8 22.1 V12 H12.8 V31.9 H19.8"/><path fill="none" stroke="currentColor" stroke-width="2.6" stroke-linecap="round" stroke-linejoin="round" d="M22.3 28.2 L25.2 31.1 L31.3 25.2"/><path fill="none" stroke="currentColor" stroke-width="2.2" stroke-linecap="round" stroke-linejoin="round" d="M17.4 16.6 H25.2 M17.4 20.6 H25.2 M17.4 24.9 H22.2"/></svg></div><div class="nm">See results about</div><div class="ct"><span class="n">9K</span> keywords</div></div>
<div class="it" style="left:47.25px;top:830.00px"><div class="bx" style="color:#868a96"><svg width="44.4" height="44.4" viewBox="0 0 44.4 44.4"><g fill="currentColor"><rect x="12.5" y="13.9" width="3" height="2.7"/><rect x="18.5" y="13.9" width="13.8" height="2.7"/><rect x="12.5" y="20.85" width="3" height="2.7"/><rect x="18.5" y="20.85" width="13.8" height="2.7"/><rect x="12.5" y="27.85" width="3" height="2.7"/><rect x="18.5" y="27.85" width="13.8" height="2.7"/></g></svg></div><div class="nm">Things to Know</div><div class="ct"><span class="n">101.9K</span> keywords</div></div>
<div class="it" style="left:269.99px;top:830.00px"><div class="bx" style="color:#868a96"><svg width="44.4" height="44.4" viewBox="0 0 44.4 44.4"><path fill="none" stroke="currentColor" stroke-width="2.5" stroke-linecap="round" stroke-linejoin="round" d="M13.5 13.6 H15.8 Q17.1 13.6 17.1 14.9 V24.7 Q17.1 26 18.4 26 H26.8 L32.5 18.3 H17.1"/><circle fill="currentColor" cx="17.9" cy="31.2" r="1.9"/><circle fill="currentColor" cx="26.3" cy="31.2" r="1.9"/></svg></div><div class="nm">Shopping ads</div><div class="ct"><span class="n">122.8K</span> keywords</div></div>
<div class="it" style="left:492.73px;top:830.00px"><div class="bx" style="color:#868a96"><svg width="44.4" height="44.4" viewBox="0 0 44.4 44.4"><rect fill="none" stroke="currentColor" stroke-width="2.6" stroke-linecap="round" stroke-linejoin="round" x="14.0" y="12.2" width="17.7" height="12.3" rx="0.8"/><g fill="none" stroke="currentColor" stroke-width="1.8" stroke-linecap="round" stroke-linejoin="round"><path d="M17.67 20.56 V17.86 Q17.67 15.86 19.34 15.86 Q21.02 15.86 21.02 17.86 V20.56 M17.67 18.86 H21.02"/><path d="M24.97 15.86 V20.56 H26.37 Q29.22 20.56 29.22 18.21 Q29.22 15.86 26.37 15.86 Z"/></g><path fill="none" stroke="currentColor" stroke-width="1.4" stroke-linecap="butt" stroke-linejoin="round" d="M17.1 28.5 H30.3 M17.1 31.2 H30.3"/></svg></div><div class="nm">Ads top</div><div class="ct"><span class="n">13.7K</span> keywords</div></div>
<div class="it" style="left:715.47px;top:830.00px"><div class="bx" style="color:#868a96"><svg width="44.4" height="44.4" viewBox="0 0 44.4 44.4"><rect fill="none" stroke="currentColor" stroke-width="2.6" stroke-linecap="round" stroke-linejoin="round" x="14.1" y="15.2" width="17.9" height="12.2" rx="0.8"/><g fill="none" stroke="currentColor" stroke-width="1.8" stroke-linecap="round" stroke-linejoin="round"><path d="M18.10 23.50 V21.00 Q18.10 19.00 19.77 19.00 Q21.45 19.00 21.45 21.00 V23.50 M18.10 22.00 H21.45"/><path d="M25.40 19.00 V23.50 H26.80 Q29.65 23.50 29.65 21.25 Q29.65 19.00 26.80 19.00 Z"/></g><path fill="none" stroke="currentColor" stroke-width="1.4" stroke-linecap="butt" stroke-linejoin="round" d="M17.4 11.45 H30.4 M17.4 31.2 H30.4"/></svg></div><div class="nm">Ads middle</div><div class="ct"><span class="n">5.3K</span> keywords</div></div>
<div class="it" style="left:938.21px;top:830.00px"><div class="bx" style="color:#868a96"><svg width="44.4" height="44.4" viewBox="0 0 44.4 44.4"><rect fill="none" stroke="currentColor" stroke-width="2.6" stroke-linecap="round" stroke-linejoin="round" x="14.3" y="18.2" width="17.9" height="12.0" rx="0.8"/><g fill="none" stroke="currentColor" stroke-width="1.8" stroke-linecap="round" stroke-linejoin="round"><path d="M18.30 26.50 V24.10 Q18.30 22.10 19.97 22.10 Q21.65 22.10 21.65 24.10 V26.50 M18.30 25.10 H21.65"/><path d="M25.60 22.10 V26.50 H27.00 Q29.85 26.50 29.85 24.30 Q29.85 22.10 27.00 22.10 Z"/></g><path fill="none" stroke="currentColor" stroke-width="1.4" stroke-linecap="butt" stroke-linejoin="round" d="M17.6 11.45 H30.6 M17.6 14.4 H30.6"/></svg></div><div class="nm">Ads bottom</div><div class="ct"><span class="n">33.8K</span> keywords</div></div>
<div class="it dis" style="left:1160.95px;top:830.00px"><div class="bx" style="color:#868a96"><svg width="44.4" height="44.4" viewBox="0 0 44.4 44.4"><circle fill="none" stroke="currentColor" stroke-width="2.6" stroke-linecap="round" stroke-linejoin="round" cx="22.8" cy="22.0" r="9.85"/><path fill="none" stroke="currentColor" stroke-width="2.4" stroke-linecap="round" stroke-linejoin="round" d="M20.0 19.6 A2.8 2.8 0 1 1 24.0 22.1 Q22.8 22.7 22.8 24.0"/><circle fill="currentColor" cx="22.8" cy="27.6" r="1.3"/></svg></div><div class="nm">FAQ</div><div class="ct"><span class="n">0</span> keywords</div></div>
<div class="it dis" style="left:1383.69px;top:830.00px"><div class="bx" style="color:#868a96"><svg width="44.4" height="44.4" viewBox="0 0 44.4 44.4"><rect fill="none" stroke="currentColor" stroke-width="2.6" stroke-linecap="round" stroke-linejoin="round" x="13.3" y="13.85" width="15.2" height="5.45" rx="1"/><rect fill="none" stroke="currentColor" stroke-width="2.6" stroke-linecap="round" stroke-linejoin="round" x="17.35" y="24.95" width="15.2" height="5.45" rx="1"/></svg></div><div class="nm">Indented</div><div class="ct"><span class="n">0</span> keywords</div></div>
<div class="it dis" style="left:47.25px;top:899.70px"><div class="bx" style="color:#868a96"><svg width="44.4" height="44.4" viewBox="0 0 44.4 44.4"><circle fill="none" stroke="currentColor" stroke-width="2.6" stroke-linecap="round" stroke-linejoin="round" cx="22.6" cy="20.7" r="8.35"/><path fill="none" stroke="currentColor" stroke-width="2.6" stroke-linecap="round" stroke-linejoin="round" d="M28.6 26.7 L31.8 29.9"/><path fill="none" stroke="currentColor" stroke-width="2.6" stroke-linecap="round" stroke-linejoin="round" d="M19.4 20.5 L21.7 22.8 L25.6 19.2"/></svg></div><div class="nm">Find results on</div><div class="ct"><span class="n">0</span> keywords</div></div>
<div class="it dis" style="left:269.99px;top:899.70px"><div class="bx" style="color:#868a96"><svg width="44.4" height="44.4" viewBox="0 0 44.4 44.4"><path fill="none" stroke="currentColor" stroke-width="2.6" stroke-linecap="round" stroke-linejoin="round" d="M15.6 13.6 H29.6 L22.5 22.3 Z M22.5 22.3 V29.7"/></svg></div><div class="nm">Refine</div><div class="ct"><span class="n">0</span> keywords</div></div>
<div class="hl"></div>
</div></body></html>
